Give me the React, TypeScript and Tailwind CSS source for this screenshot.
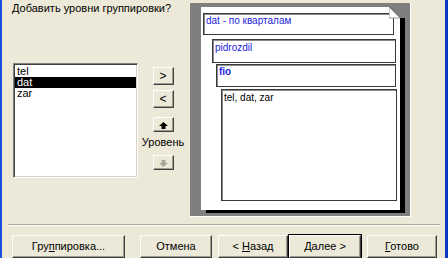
import React from "react";

const font = { fontFamily: '"Liberation Sans", Arial, sans-serif' };

function Btn({ className = "", children }: { className?: string; children?: React.ReactNode }) {
  return (
    <div
      className={`flex items-center justify-center bg-[#ECE9D8] border-t border-l border-t-white border-l-white border-r border-b border-r-[#404040] border-b-[#404040] shadow-[inset_-1px_-1px_0_#9d9b8e] ${className}`}
    >
      <span className="whitespace-pre">{children}</span>
    </div>
  );
}

function GroupBox({ className = "", children }: { className?: string; children?: React.ReactNode }) {
  return (
    <div className={`border border-[#3a3a3a] shadow-[inset_1px_1px_0_#8a8a8a] pl-[2px] text-[10px] leading-[12px] ${className}`}>
      {children}
    </div>
  );
}

export default function App() {
  const fields = ["tel", "dat", "zar"];
  const selected = "dat";

  return (
    <div className="flex w-[448px] h-[258px] overflow-hidden bg-[#ECE9D8] text-[11px] text-black" style={font}>
      <div className="w-[2px] bg-[#1a4fdc]" />
      <div className="flex flex-col w-[443px]">
        <div className="flex h-[224px]">
          {/* left column */}
          <div className="w-[188px] flex flex-col">
            <div className="pl-[10px] pt-[2px] leading-[13px]">Добавить уровни группировки?</div>
            <div className="flex mt-[48px]">
              <div className="ml-[11px] w-[125px] h-[115px] bg-white border border-t-[#808080] border-l-[#808080] border-r-white border-b-white shadow-[inset_1px_1px_0_#404040,inset_-1px_-1px_0_#d4d0c8] p-[1px] pt-[2px]">
                {fields.map((f) => (
                  <div
                    key={f}
                    className={`h-[11px] leading-[11px] pl-[2px] ${f === selected ? "bg-black text-white" : ""}`}
                  >
                    {f}
                  </div>
                ))}
              </div>
              <div className="w-[44px] ml-[3px] flex flex-col items-center">
                <Btn className="mt-[4px] w-[21px] h-[18px] text-[12px]">&gt;</Btn>
                <Btn className="mt-[5px] w-[21px] h-[18px] text-[12px]">&lt;</Btn>
                <Btn className="mt-[9px] w-[21px] h-[15px]">
                  <svg width="9" height="7" viewBox="0 0 9 7" className="inline-block align-middle">
                    <path d="M4.5 0 L9 4 L6.5 4 L6.5 7 L2.5 7 L2.5 4 L0 4 Z" fill="#000" />
                  </svg>
                </Btn>
                <div className="mt-[4px] leading-[13px] whitespace-nowrap">Уровень</div>
                <Btn className="mt-[6px] w-[21px] h-[15px]">
                  <svg width="9" height="7" viewBox="0 0 9 7" className="inline-block align-middle">
                    <path d="M4.5 7 L9 3 L6.5 3 L6.5 0 L2.5 0 L2.5 3 L0 3 Z" fill="#aca899" />
                  </svg>
                </Btn>
              </div>
            </div>
          </div>

          {/* preview panel */}
          <div className="mt-[3px] w-[221px] h-[214px] bg-[#7f7f7f] border-r border-b border-r-white border-b-white pl-[11px] pt-[4px]">
            <div className="relative w-[199px] h-[203px] bg-white shadow-[5px_3px_0_#000] flex flex-col">
              <svg className="absolute top-0 right-[-5px]" width="16" height="12" viewBox="0 0 16 12">
                <path d="M0 0 L11 0 L11 11 Z" fill="#7f7f7f" />
                <rect x="11" y="0" width="5" height="11" fill="#7f7f7f" />
                <path d="M0 0 L11 11 L0 11 Z" fill="#ffffff" />
                <path d="M0 0 L0 11 L11 11" fill="none" stroke="#9a9a9a" strokeWidth="1" />
                <path d="M0.5 0 L11 10.5" stroke="#5a5a5a" strokeWidth="1" />
              </svg>
              <GroupBox className="ml-[2px] mt-[6px] w-[191px] h-[22px] pt-[1px] text-[#1c1cdc]">dat - по кварталам</GroupBox>
              <GroupBox className="ml-[11px] mt-[4px] w-[184px] h-[24px] pt-[2px] text-[#1c1cdc]">pidrozdil</GroupBox>
              <GroupBox className="ml-[15px] mt-[1px] w-[180px] h-[23px] pt-[1px] font-bold text-[#1c1cdc]">fio</GroupBox>
              <GroupBox className="ml-[20px] mt-[2px] w-[176px] h-[112px] pt-[2px]">tel, dat, zar</GroupBox>
            </div>
          </div>
        </div>

        {/* separator */}
        <div className="ml-[6px] mr-[5px] mt-[2px] border-t border-t-[#aca899] border-b border-b-white" />

        {/* bottom buttons */}
        <div className="flex mt-[9px] pl-[10px]">
          <Btn className="w-[113px] h-[23px]">
            Гру<span className="underline">п</span>пировка...
          </Btn>
          <Btn className="ml-[15px] w-[72px] h-[23px]">Отмена</Btn>
          <Btn className="ml-[6px] w-[70px] h-[23px]">
            {"< "}<span className="underline">Н</span>азад
          </Btn>
          <Btn className="ml-[1px] w-[72px] h-[23px] outline outline-1 outline-black">
            <span className="underline">Д</span>алее &gt;
          </Btn>
          <Btn className="ml-[6px] w-[70px] h-[23px]">
            <span className="underline">Г</span>отово
          </Btn>
        </div>
      </div>
      <div className="w-[3px] bg-[#0b35c4]" />
    </div>
  );
}
